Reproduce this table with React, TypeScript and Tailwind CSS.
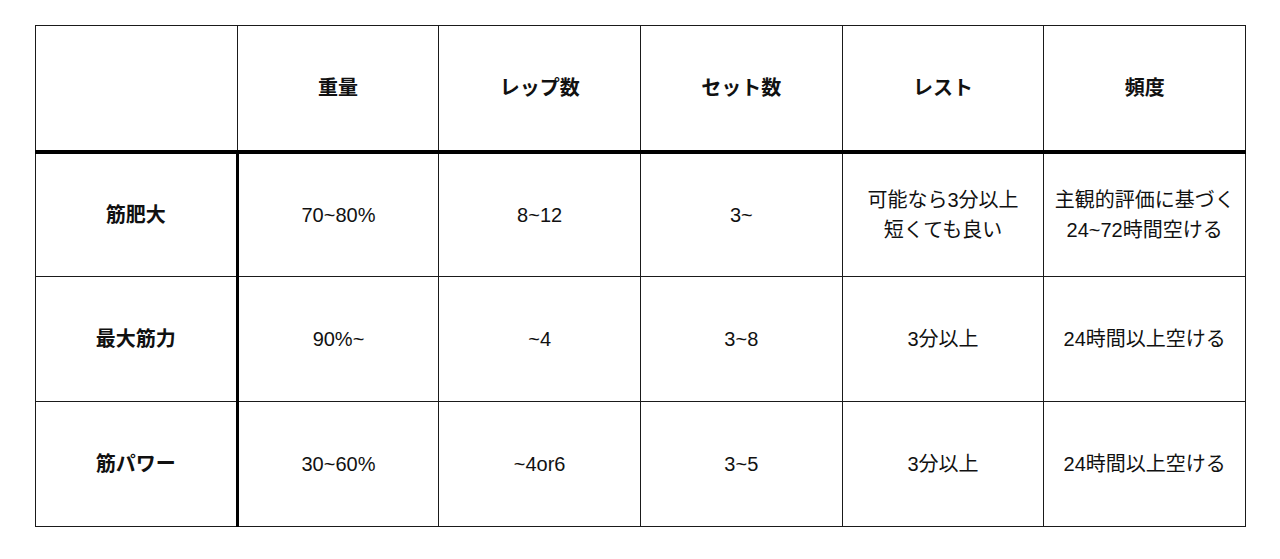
import React from 'react';

const headers = ['', '重量', 'レップ数', 'セット数', 'レスト', '頻度'];

const rows: string[][] = [
  ['筋肥大', '70~80%', '8~12', '3~', '可能なら3分以上\n短くても良い', '主観的評価に基づく\n24~72時間空ける'],
  ['最大筋力', '90%~', '~4', '3~8', '3分以上', '24時間以上空ける'],
  ['筋パワー', '30~60%', '~4or6', '3~5', '3分以上', '24時間以上空ける'],
];

export default function App() {
  return (
    <div
      className="w-[1280px] h-[559px] bg-white pt-[25px] pl-[35px]"
      style={{ fontFamily: '"Liberation Sans", "Noto Sans CJK JP", sans-serif' }}
    >
      <table className="w-[1211px] table-fixed border-collapse text-[20px] leading-[30px] text-[#111]">
        <thead>
          <tr className="h-[126px]">
            {headers.map((h, i) => (
              <th
                key={i}
                className="border border-[#1a1a1a] border-b-4 border-b-black font-bold text-center align-middle"
              >
                {h}
              </th>
            ))}
          </tr>
        </thead>
        <tbody>
          {rows.map((row, r) => (
            <tr key={r} className="h-[125px]">
              {row.map((cell, c) => (
                <td
                  key={c}
                  className={
                    c === 0
                      ? 'border border-[#1a1a1a] border-r-[3px] border-r-black font-bold text-center align-middle'
                      : 'border border-[#1a1a1a] text-center align-middle whitespace-pre-line'
                  }
                >
                  {cell}
                </td>
              ))}
            </tr>
          ))}
        </tbody>
      </table>
    </div>
  );
}
